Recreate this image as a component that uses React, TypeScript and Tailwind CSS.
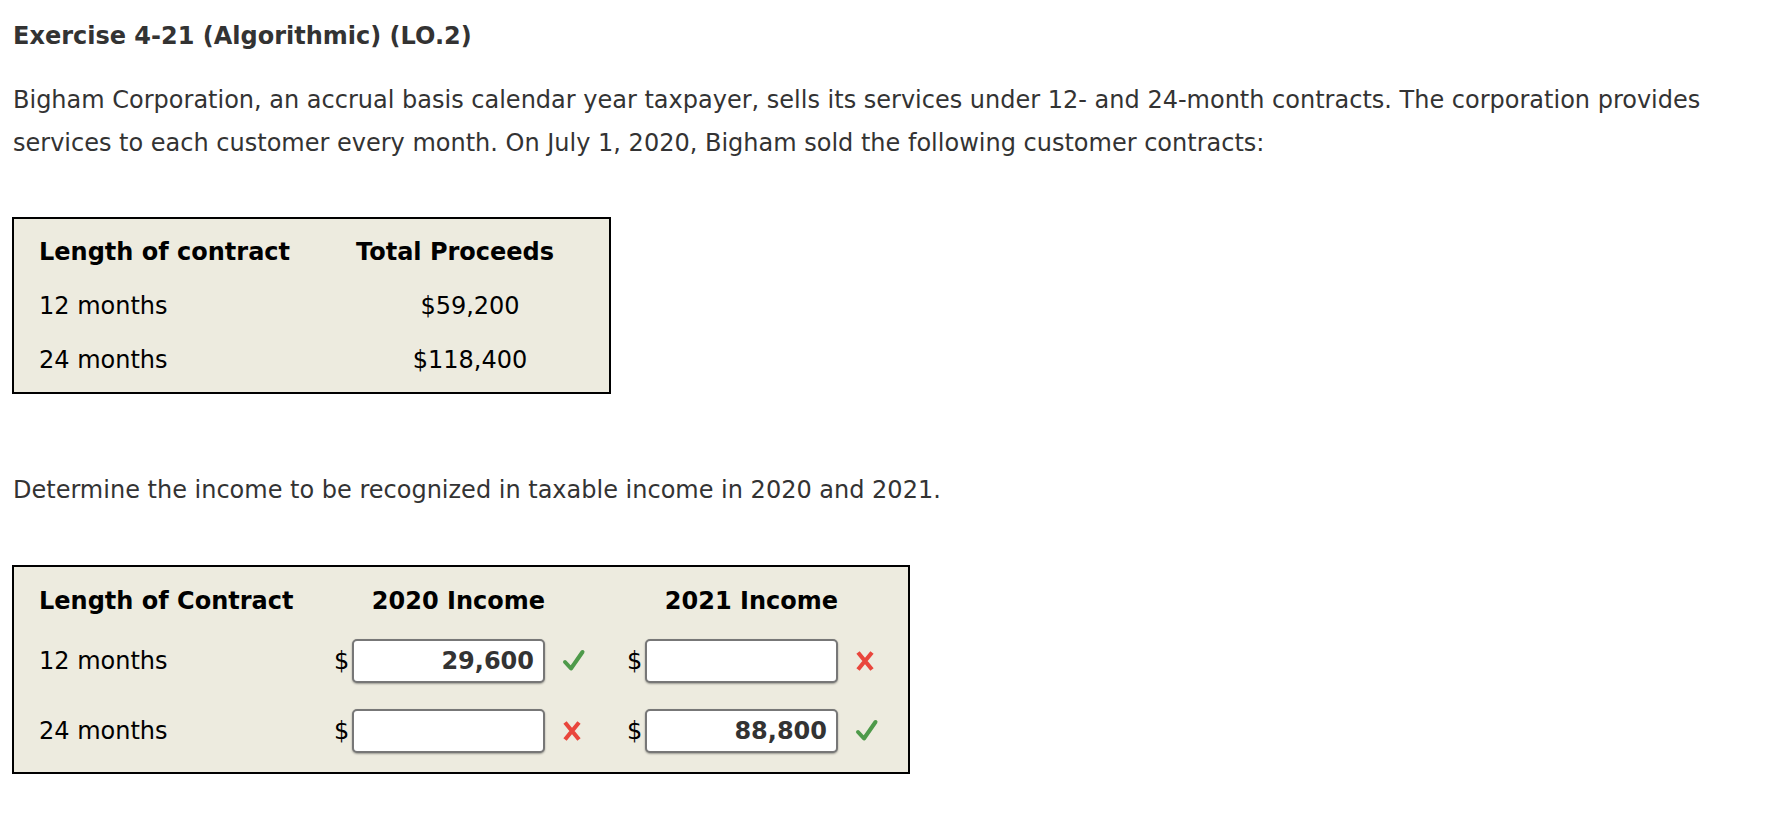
import React from 'react'

const font = "font-['DejaVu_Sans','Verdana',sans-serif]"

function Check() {
  return (
    <svg width="24" height="24" viewBox="0 0 24 24" className="block">
      <path d="M3 13 L9 19.5 L20.5 3" fill="none" stroke="#4e9a4a" strokeWidth="4" strokeLinecap="round" strokeLinejoin="round" />
    </svg>
  )
}

function Cross() {
  return (
    <svg width="20" height="22" viewBox="0 0 20 22" className="block">
      <path d="M3 2.5 L17 19.5 M17 2.5 L3 19.5" fill="none" stroke="#e9463c" strokeWidth="4.2" strokeLinecap="butt" />
    </svg>
  )
}

function MoneyInput({ value, status }: { value?: string; status: 'ok' | 'bad' }) {
  return (
    <div className="flex items-center shrink-0">
      <span className="w-[18px] shrink-0 text-black">$</span>
      <div className="w-[193px] h-[44px] shrink-0 bg-white border-2 border-[#777] rounded-[5px] shadow-[0_1px_2px_rgba(0,0,0,0.35)] flex items-center justify-end pr-[9px] font-bold text-[#333]">
        {value}
      </div>
      <div className="w-[82px] shrink-0 pl-[17px] flex items-center">
        {status === 'ok' ? <Check /> : <Cross />}
      </div>
    </div>
  )
}

export default function App() {
  const rows = [
    { length: '12 months', a: { value: '29,600', status: 'ok' as const }, b: { value: '', status: 'bad' as const } },
    { length: '24 months', a: { value: '', status: 'bad' as const }, b: { value: '88,800', status: 'ok' as const } },
  ]

  return (
    <div className={`${font} bg-white min-h-[814px] px-[13px] text-[24px] text-[#333]`}>
      <h1 className="pt-[15px] leading-[43px] font-bold">Exercise 4-21 (Algorithmic) (LO.2)</h1>

      <p className="mt-[21px] leading-[43px]">
        Bigham Corporation, an accrual basis calendar year taxpayer, sells its services under 12- and 24-month contracts. The corporation provides services to each customer every month. On July 1, 2020, Bigham sold the following customer contracts:
      </p>

      <div className="mt-[52px] -ml-px w-[599px] border-2 border-black bg-[#edebdf] text-black pl-[25px] pt-[6px] pb-[5px]">
        <div className="grid grid-cols-[317px_228px] auto-rows-[54px] items-center">
          <div className="font-bold">Length of contract</div>
          <div className="font-bold">Total Proceeds</div>
          <div>12 months</div>
          <div className="text-center">$59,200</div>
          <div>24 months</div>
          <div className="text-center">$118,400</div>
        </div>
      </div>

      <p className="mt-[75px] leading-[43px]">Determine the income to be recognized in taxable income in 2020 and 2021.</p>

      <div className="mt-[53px] -ml-px w-[898px] border-2 border-black bg-[#edebdf] text-black pl-[25px] pt-[12px] pb-[19px]">
        <div className="flex items-center h-[43px] font-bold">
          <div className="w-[295px] shrink-0">Length of Contract</div>
          <div className="w-[211px] shrink-0 text-right">2020 Income</div>
          <div className="w-[82px] shrink-0" />
          <div className="w-[211px] shrink-0 text-right">2021 Income</div>
        </div>
        {rows.map((r, i) => (
          <div key={r.length} className={`flex items-center ${i === 0 ? 'mt-[17px]' : 'mt-[26px]'}`}>
            <div className="w-[295px] shrink-0">{r.length}</div>
            <MoneyInput value={r.a.value} status={r.a.status} />
            <MoneyInput value={r.b.value} status={r.b.status} />
          </div>
        ))}
      </div>
    </div>
  )
}
